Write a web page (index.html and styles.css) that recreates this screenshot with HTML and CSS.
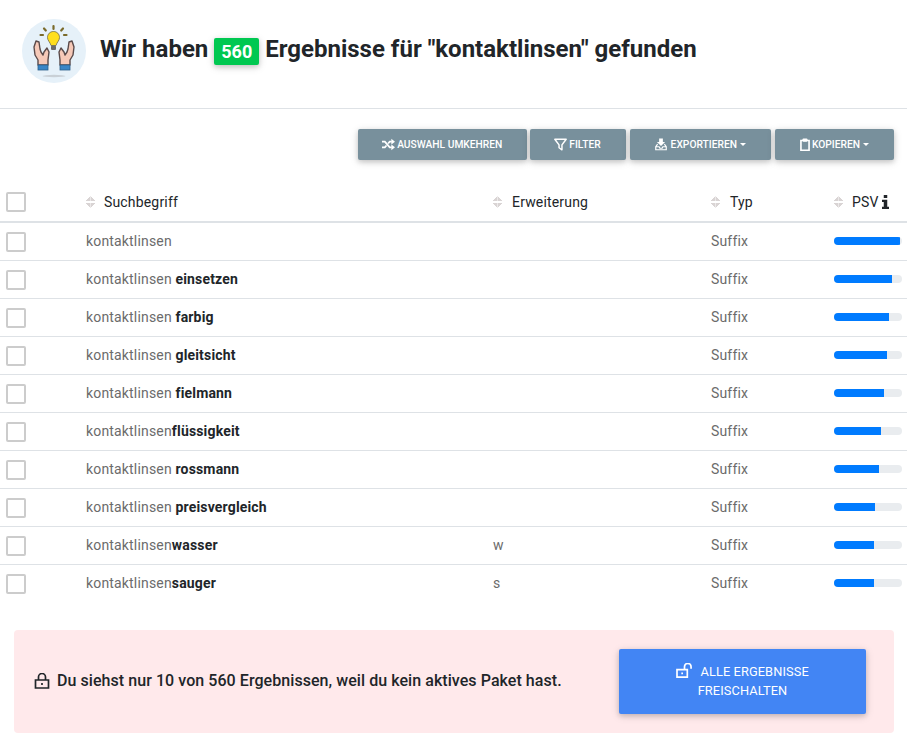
FILE: index.html
```html
<!DOCTYPE html>
<html lang="de">
<head>
    <meta charset="UTF-8">
    <meta name="viewport" content="width=device-width, initial-scale=1.0">
    <title>Ergebnisse</title>
    <link rel="stylesheet" href="styles.css">
</head>
<body>
    <!-- header -->
    <div class="head">
        <svg class="head-icon" viewBox="0 0 64 64" width="64" height="64">
            <circle cx="32" cy="32" r="32" fill="#e6f1f9"/>
            <ellipse cx="32" cy="57" rx="11.5" ry="1.2" fill="#c9d0d6"/>
            <path d="M31.500 7v3M22 9.500l1.800 2M41 9.500l-1.800 2M18.500 16h2.500M42 16h2.500" fill="none" stroke="#7a6a2a" stroke-width="2.200" stroke-linecap="round"/>
            <path d="M31.500 12.500c-3.500 0-6 2.600-6 6 0 3 2.500 4.500 3.500 8h5c1-3.500 3.500-5 3.500-8 0-3.400-2.500-6-6-6z" fill="#ffdf1d" stroke="#6e6a45" stroke-width=".8"/>
            <rect x="29" y="26.500" width="5" height="4.500" rx="1" fill="#6b6b6b"/>
            <g>
                <path d="M14 22l-2 6 1 8 3 5v5h10v-5l1-8-2-4-3 4-1 3-2-3-1-3-1-7z" fill="#f6c9b8" stroke="#5a4a4a" stroke-width="1.400" stroke-linejoin="round"/>
                <rect x="16" y="46" width="10" height="5" fill="#3a85c6" stroke="#2c5f8a" stroke-width=".8"/>
            </g>
            <g transform="matrix(-1 0 0 1 64 0)">
                <path d="M14 22l-2 6 1 8 3 5v5h10v-5l1-8-2-4-3 4-1 3-2-3-1-3-1-7z" fill="#f6c9b8" stroke="#5a4a4a" stroke-width="1.400" stroke-linejoin="round"/>
                <rect x="16" y="46" width="10" height="5" fill="#3a85c6" stroke="#2c5f8a" stroke-width=".8"/>
            </g>
        </svg>
        <h1 class="title">Wir haben <span class="badge">560</span> Ergebnisse für "kontaktlinsen" gefunden</h1>
    </div>

    <!-- buttons -->
    <div class="toolbar">
        <button class="btn">
            <svg class="btn-icon" viewBox="0 0 16 16"><path d="M0 4.500h3.500l6 7h2.500M0 11.500h3.500l2-2.300M7.500 6.800l2-2.300h2.500" fill="none" stroke="#fff" stroke-width="2.200"/><path d="M11.500 1l4.500 3.500L11.500 8zM11.500 8l4.500 3.500-4.500 3.500z" fill="#fff"/></svg>
            Auswahl umkehren
        </button>
        <button class="btn">
            <svg class="btn-icon" viewBox="0 0 16 16"><path d="M1 1.500h14L9.800 8.500v6L6.200 12V8.500z" fill="none" stroke="#fff" stroke-width="1.800" stroke-linejoin="round"/></svg>
            Filter
        </button>
        <button class="btn btn-export">
            <svg class="btn-icon" viewBox="0 0 16 16"><path d="M5.500 0h5v4.500h3L8 10 2.500 4.500h3z" fill="#fff"/><path d="M3.500 7.500L1 11v4h14v-4l-2.500-3.500M1 11h4.500l1 2h3l1-2H15" fill="none" stroke="#fff" stroke-width="1.600"/></svg>
            Exportieren<span class="caret"></span>
        </button>
        <button class="btn btn-copy">
            <svg class="btn-icon" viewBox="0 0 12 16"><path d="M1 3h10v12H1z" fill="none" stroke="#fff" stroke-width="2"/><rect x="3" y="0.500" width="6" height="4" rx="1" fill="#fff"/></svg>
            Kopieren<span class="caret"></span>
        </button>
    </div>

    <!-- results -->
    <table class="results">
        <thead>
            <tr>
                <th class="col-check"><span class="check"></span></th>
                <th class="col-term"><span class="sort"></span>Suchbegriff</th>
                <th class="col-ext"><span class="sort"></span>Erweiterung</th>
                <th class="col-type"><span class="sort"></span>Typ</th>
                <th class="col-psv"><span class="sort"></span>PSV
                    <svg class="info" viewBox="0 0 8 16" width="7" height="14"><path d="M2 0h4v3.500H2zM0 5.500h6v8h2V16H0v-2.500h2V8H0z" fill="#212529"/></svg>
                </th>
            </tr>
        </thead>
        <tbody>
            <tr><td><span class="check"></span></td><td>kontaktlinsen</td><td></td><td>Suffix</td><td><div class="bar"><div class="bar-fill" style="width:97%"></div></div></td></tr>
            <tr><td><span class="check"></span></td><td>kontaktlinsen <b>einsetzen</b></td><td></td><td>Suffix</td><td><div class="bar"><div class="bar-fill" style="width:85%"></div></div></td></tr>
            <tr><td><span class="check"></span></td><td>kontaktlinsen <b>farbig</b></td><td></td><td>Suffix</td><td><div class="bar"><div class="bar-fill" style="width:81%"></div></div></td></tr>
            <tr><td><span class="check"></span></td><td>kontaktlinsen <b>gleitsicht</b></td><td></td><td>Suffix</td><td><div class="bar"><div class="bar-fill" style="width:78%"></div></div></td></tr>
            <tr><td><span class="check"></span></td><td>kontaktlinsen <b>fielmann</b></td><td></td><td>Suffix</td><td><div class="bar"><div class="bar-fill" style="width:74%"></div></div></td></tr>
            <tr><td><span class="check"></span></td><td>kontaktlinsen<b>flüssigkeit</b></td><td></td><td>Suffix</td><td><div class="bar"><div class="bar-fill" style="width:69%"></div></div></td></tr>
            <tr><td><span class="check"></span></td><td>kontaktlinsen <b>rossmann</b></td><td></td><td>Suffix</td><td><div class="bar"><div class="bar-fill" style="width:66%"></div></div></td></tr>
            <tr><td><span class="check"></span></td><td>kontaktlinsen <b>preisvergleich</b></td><td></td><td>Suffix</td><td><div class="bar"><div class="bar-fill" style="width:60%"></div></div></td></tr>
            <tr><td><span class="check"></span></td><td>kontaktlinsen<b>wasser</b></td><td>w</td><td>Suffix</td><td><div class="bar"><div class="bar-fill" style="width:59%"></div></div></td></tr>
            <tr><td><span class="check"></span></td><td>kontaktlinsen<b>sauger</b></td><td>s</td><td>Suffix</td><td><div class="bar"><div class="bar-fill" style="width:59%"></div></div></td></tr>
        </tbody>
    </table>

    <!-- upgrade notice -->
    <div class="notice">
        <p class="notice-text">
            <svg class="lock" viewBox="0 0 16 16" width="16" height="16"><path d="M1.500 7h13v8h-13zM4.500 7V4a3.500 3.500 0 0 1 7 0v3M8 10v2" fill="none" stroke="#212529" stroke-width="1.700"/></svg>
            Du siehst nur 10 von 560 Ergebnissen, weil du kein aktives Paket hast.
        </p>
        <button class="unlock">
            <svg class="unlock-icon" viewBox="0 0 18 16" width="17" height="15"><path d="M1 7h11v8H1zM9 7V4a3.500 3.500 0 0 1 7 0v2M6.500 10v2" fill="none" stroke="#fff" stroke-width="1.800"/></svg>
            Alle Ergebnisse<br>freischalten
        </button>
    </div>
</body>
</html>
```

FILE: styles.css
```css
*{
    margin: 0;
    padding: 0;
    box-sizing: border-box;
}
body{
    font-family: Roboto, "Liberation Sans", sans-serif;
    font-size: 14px;
    color: #212529;
    background: #fff;
}
.head{
    height: 109px;
    padding: 0 22px;
    display: flex;
    align-items: center;
    border-bottom: 1px solid #dee2e6;
}
.head-icon{
    flex: none;
    margin-right: 14px;
    margin-bottom: 6px;
}
.title{
    font-size: 24px;
    font-weight: 700;
    color: #212529;
    margin-top: -9px;
}
.badge{
    display: inline-block;
    width: 45px;
    height: 27px;
    line-height: 27px;
    vertical-align: -1px;
    text-align: center;
    font-size: 18px;
    font-weight: 700;
    color: #fff;
    background: #00c851;
    border-radius: 2px;
    box-shadow: 0 2px 5px rgba(0,0,0,.16), 0 2px 10px rgba(0,0,0,.12);
}
.toolbar{
    display: flex;
    justify-content: flex-end;
    padding: 20px 13px 0 0;
    gap: 3px;
}
.btn{
    height: 31px;
    padding: 0 25px 0 24px;
    display: flex;
    align-items: center;
    border: none;
    border-radius: 2px;
    background: #78909c;
    color: #fff;
    font-family: inherit;
    font-size: 10.24px;
    font-weight: 500;
    text-transform: uppercase;
    box-shadow: 0 2px 5px rgba(0,0,0,.16), 0 2px 10px rgba(0,0,0,.12);
}
.btn-export{
    margin-left: 1px;
    padding-left: 25px;
}
.btn-copy{
    margin-left: 1px;
    padding-left: 25px;
}
.btn-icon{
    width: 13px;
    height: 13px;
    margin-right: 2px;
}
.btn-export .btn-icon{
    width: 12px;
    margin-right: 4px;
}
.btn-copy .btn-icon{
    width: 10px;
    margin-right: 2px;
}
.caret{
    display: inline-block;
    margin-left: 3px;
    border-top: 3px solid #fff;
    border-left: 3px solid transparent;
    border-right: 3px solid transparent;
}
.results{
    width: 100%;
    margin-top: 22px;
    border-collapse: collapse;
    table-layout: fixed;
    letter-spacing: .17px;
}
.results th{
    height: 40px;
    font-weight: 400;
    text-align: left;
    white-space: nowrap;
    color: #212529;
    border-bottom: 2px solid #dee2e6;
}
.results td{
    height: 38px;
    color: #6b6b6b;
    border-bottom: 1px solid #dee2e6;
}
.results tr:last-child td{
    border-bottom: none;
}
.results b{
    font-weight: 700;
    color: #212529;
}
.col-check{
    width: 86px;
}
.col-term{
    width: 407px;
}
.col-ext{
    width: 218px;
}
.col-type{
    width: 123px;
}
.results th:first-child, .results td:first-child{
    padding-left: 6px;
}
.check{
    display: block;
    width: 20px;
    height: 20px;
    border: 2px solid #ccc;
    border-radius: 2px;
}
.results td .check{
    margin-top: 1px;
}
.sort{
    display: inline-block;
    width: 18px;
    height: 12px;
    vertical-align: -1px;
    background:
        linear-gradient(to top left, #d9d4d4 50%, transparent 50%) 0 0 / 4.5px 5px no-repeat,
        linear-gradient(to top right, #d9d4d4 50%, transparent 50%) 4.5px 0 / 4.5px 5px no-repeat,
        linear-gradient(to bottom left, #d9d4d4 50%, transparent 50%) 0 7px / 4.5px 5px no-repeat,
        linear-gradient(to bottom right, #d9d4d4 50%, transparent 50%) 4.5px 7px / 4.5px 5px no-repeat;
}
.col-ext .sort, .col-type .sort{
    width: 19px;
}
.info{
    vertical-align: -2px;
}
.bar{
    width: 68px;
    height: 8px;
    background: #e9ecef;
    border-radius: 4px;
    overflow: hidden;
}
.bar-fill{
    height: 100%;
    background: #007bff;
}
.notice{
    margin: 28px 13px 0 14px;
    height: 103px;
    padding: 0 28px 0 20px;
    display: flex;
    align-items: center;
    justify-content: space-between;
    background: #ffe9eb;
    border-radius: 4px;
}
.notice-text{
    font-size: 16px;
    font-weight: 500;
    letter-spacing: .06px;
    margin-bottom: 2px;
    color: #212529;
}
.lock{
    vertical-align: -3px;
    margin-right: 3px;
}
.unlock{
    width: 247px;
    height: 65px;
    padding: 0 40px 2px;
    border: none;
    border-radius: 2px;
    background: #4285f4;
    color: #fff;
    font-family: inherit;
    font-size: 12.8px;
    line-height: 19px;
    letter-spacing: .1px;
    text-transform: uppercase;
    box-shadow: 0 2px 5px rgba(0,0,0,.16), 0 2px 10px rgba(0,0,0,.12);
}
.unlock-icon{
    margin-right: 4px;
    vertical-align: -2px;
}
```
